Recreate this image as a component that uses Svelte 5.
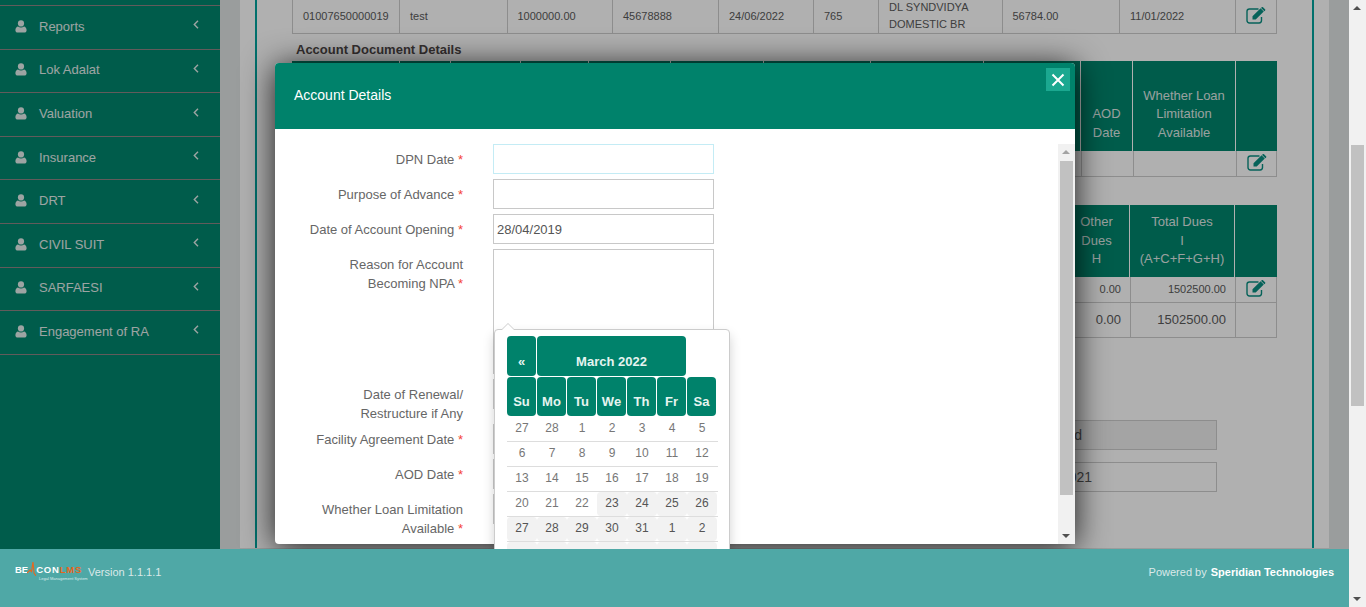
<script lang="ts">
  const menu = ["Reports", "Lok Adalat", "Valuation", "Insurance", "DRT", "CIVIL SUIT", "SARFAESI", "Engagement of RA"];

  const loanRow = ["01007650000019", "test", "1000000.00", "45678888", "24/06/2022", "765", "DL SYNDVIDYA DOMESTIC BR", "56784.00", "11/01/2022"];

  const weekdays = ["Su", "Mo", "Tu", "We", "Th", "Fr", "Sa"];

  // muted = cell with the grey background
  const weeks = [
    [27, 28, 1, 2, 3, 4, 5],
    [6, 7, 8, 9, 10, 11, 12],
    [13, 14, 15, 16, 17, 18, 19],
    [20, 21, 22, 23, 24, 25, 26],
    [27, 28, 29, 30, 31, 1, 2],
    [3, 4, 5, 6, 7, 8, 9]
  ];

  function isMuted(w: number, d: number) {
    return w > 3 || (w === 3 && d >= 3);
  }
</script>

{#snippet editIcon()}
  <svg class="edit" viewBox="0 0 20 17" aria-hidden="true">
    <path d="M15.5 10v3.6a2.4 2.4 0 0 1-2.4 2.4H3.4A2.4 2.4 0 0 1 1 13.6V4.4A2.4 2.4 0 0 1 3.4 2h9.1" fill="none" stroke="currentColor" stroke-width="1.4" />
    <path d="M6.5 9.2 14.6 1.2l3.2 3.2-8.1 8H6.5zM15.6.3a1 1 0 0 1 1.4 0l2 2a1 1 0 0 1 0 1.4l-.6.6-3.3-3.3z" fill="currentColor" />
  </svg>
{/snippet}

<div class="app">
  <div class="viewport">
    <div class="page">
      <aside class="sidebar">
        {#each menu as item}
          <div class="menu-item">
            <svg class="user" viewBox="0 0 12 13" aria-hidden="true">
              <circle cx="6" cy="3.4" r="3.1" fill="currentColor" />
              <path d="M.4 10.3C.4 8 1.6 6.6 3 6.4c.8.7 1.8 1 3 1s2.200-.3 3-1c1.400.2 2.600 1.600 2.600 3.900 0 1.500-1 2.300-2.300 2.300H2.700C1.400 12.600.4 11.800.4 10.300z" fill="currentColor" />
            </svg>
            <span class="menu-label">{item}</span>
            <svg class="chevron" viewBox="0 0 6 9" aria-hidden="true">
              <path d="M5 .8 1.300 4.500 5 8.200" fill="none" stroke="currentColor" stroke-width="1.400" />
            </svg>
          </div>
        {/each}
      </aside>

      <main class="content">
        <div class="panel">
          <div class="frame">
            <div class="row loan-grid">
              {#each loanRow as cell}
                <div class="cell">{cell}</div>
              {/each}
              <div class="cell icon-cell">{@render editIcon()}</div>
            </div>

            <h4 class="section-title">Account Document Details</h4>

            <div class="row doc-grid head">
              {#each Array(9) as _}
                <div class="th"></div>
              {/each}
              <div class="th">AOD Date</div>
              <div class="th">Whether Loan Limitation Available</div>
              <div class="th"></div>
            </div>
            <div class="row doc-grid data">
              {#each Array(11) as _}
                <div class="cell"></div>
              {/each}
              <div class="cell icon-cell">{@render editIcon()}</div>
            </div>

            <div class="row dues-grid head dues">
              <div class="th"></div>
              <div class="th">Other Dues<br />H</div>
              <div class="th">Total Dues<br />I<br />(A+C+F+G+H)</div>
              <div class="th"></div>
            </div>
            <div class="row dues-grid data">
              <div class="cell"></div>
              <div class="cell num">0.00</div>
              <div class="cell num">1502500.00</div>
              <div class="cell icon-cell">{@render editIcon()}</div>
            </div>
            <div class="row dues-grid total">
              <div class="cell"></div>
              <div class="cell num">0.00</div>
              <div class="cell num">1502500.00</div>
              <div class="cell"></div>
            </div>

            <div class="page-fields">
              <div class="page-input disabled">Approved</div>
              <div class="page-input">31/12/2021</div>
            </div>
          </div>
        </div>
      </main>
    </div>

    <div class="overlay"></div>

    <div class="modal" role="dialog" aria-label="Account Details">
      <header class="modal-head">
        <span>Account Details</span>
        <button class="close" type="button" aria-label="Close">
          <svg viewBox="0 0 14 14" aria-hidden="true">
            <path d="M1.500 1.500l11 11M12.500 1.500l-11 11" stroke="#fff" stroke-width="2" fill="none" />
          </svg>
        </button>
      </header>

      <div class="modal-body">
        <form class="form">
          <div class="label">DPN Date <b>*</b></div>
          <div class="input focused"></div>

          <div class="label">Purpose of Advance <b>*</b></div>
          <div class="input"></div>

          <div class="label">Date of Account Opening <b>*</b></div>
          <div class="input">28/04/2019</div>

          <div class="label">Reason for Account<br />Becoming NPA <b>*</b></div>
          <div class="input area"></div>

          <div class="label tall">Date of Renewal/<br />Restructure if Any</div>
          <div class="input"></div>

          <div class="label">Facility Agreement Date <b>*</b></div>
          <div class="input"></div>

          <div class="label">AOD Date <b>*</b></div>
          <div class="input"></div>

          <div class="label">Whether Loan Limitation<br />Available <b>*</b></div>
          <div class="input"></div>
        </form>

        <div class="modal-scroll">
          <span class="arrow up faint"></span>
          <div class="modal-thumb"></div>
          <span class="arrow down"></span>
        </div>
      </div>

      <div class="datepicker">
        <div class="dp-grid dp-head">
          <div class="dp-btn">«</div>
          <div class="dp-btn month">March 2022</div>
        </div>
        <div class="dp-grid dp-days">
          {#each weekdays as day}
            <div class="dp-btn dow">{day}</div>
          {/each}
        </div>
        {#each weeks as week, w}
          <div class="dp-grid dp-week">
            {#each week as date, d}
              <div class="date" class:muted={isMuted(w, d)}>{date}</div>
            {/each}
          </div>
        {/each}
      </div>
    </div>

    <footer class="footer">
      <div class="brand">
        <div class="logo">
          <div class="logo-word">
            <span class="be">BE</span><svg class="peak" viewBox="0 0 9 14" aria-hidden="true"><path d="M0 11 3 8 4.500 9.500 6 0 7 11 9 14" fill="none" stroke="#e8661c" stroke-width="1.100" /></svg><span>CON</span><span class="lms">LMS</span>
          </div>
          <div class="logo-sub">Legal Management System</div>
        </div>
        <span class="version">Version 1.1.1.1</span>
      </div>
      <div class="powered">Powered by <strong>Speridian Technologies</strong></div>
    </footer>
  </div>

  <div class="window-scroll">
    <span class="arrow up"></span>
    <div class="window-thumb"></div>
    <span class="arrow down"></span>
  </div>
</div>

<style>
  :global(body) {
    margin: 0;
    overflow: hidden;
  }

  .app {
    display: flex;
    width: 1366px;
    height: 607px;
    font-family: "Liberation Sans", Arial, sans-serif;
    font-size: 13px;
    overflow: hidden;
  }

  .viewport {
    position: relative;
    flex: 0 0 1349px;
    display: flex;
    flex-direction: column;
    overflow: hidden;
  }

  .page {
    flex: 1;
    min-height: 0;
    display: flex;
    overflow: hidden;
  }

  /* sidebar */
  .sidebar {
    flex: 0 0 220px;
    padding-top: 5px;
    background: #00866d;
    box-sizing: border-box;
  }

  .menu-item {
    display: flex;
    align-items: center;
    height: 43.62px;
    box-sizing: border-box;
    padding: 0 21px 2px 15px;
    border-top: 1px solid #8f8585;
    color: #e4eeec;
    font-size: 13px;
  }

  .menu-item:last-child {
    height: 44.62px;
    padding-bottom: 3px;
    border-bottom: 1px solid #8f8585;
  }

  .user {
    width: 12px;
    height: 13px;
    margin-right: 12px;
  }

  .menu-label {
    flex: 1;
  }

  .chevron {
    width: 6px;
    height: 9px;
    margin-top: -3px;
  }

  /* page behind the dialog */
  .content {
    flex: 1;
    min-width: 0;
    padding: 0 20px;
    background: #dfe4e4;
  }

  .panel {
    height: 100%;
    padding: 0 15px;
    background: #fff;
  }

  .frame {
    height: 100%;
    box-sizing: border-box;
    padding: 0 35px;
    border-left: 2px solid #00a39d;
    border-right: 2px solid #00a39d;
    color: #5a5a5a;
  }

  .row {
    display: grid;
    width: 985px;
    box-sizing: border-box;
    border-left: 1px solid #ccc;
    font-size: 11px;
  }

  .loan-grid {
    grid-template-columns: 107px 107.500px 105.500px 106px 95px 65px 123.500px 117.500px 116px 1fr;
    height: 35px;
    margin-top: -1px;
    border-bottom: 1px solid #ccc;
  }

  .doc-grid {
    grid-template-columns: 108px 51px 70px 68px 82px 93px 107px 113px 97px 52px 103px 1fr;
  }

  .dues-grid {
    grid-template-columns: 772px 66px 105px 1fr;
  }

  .cell {
    display: flex;
    align-items: center;
    padding: 0 10px;
    line-height: 17px;
    border-right: 1px solid #ccc;
    min-width: 0;
  }

  .icon-cell {
    padding: 0 0 2px 10px;
    color: #0a8f82;
  }

  .edit {
    width: 20px;
    height: 17px;
  }

  .section-title {
    margin: 0;
    height: 27px;
    padding: 9px 0 0 4px;
    box-sizing: border-box;
    font-size: 13px;
    line-height: 14px;
    color: #4d4646;
  }

  .head {
    height: 90px;
    background: #00866d;
    border-left: 0;
    color: #dfe8e6;
    font-size: 13px;
  }

  .head.dues {
    height: 72px;
    margin-top: 28px;
  }

  .th {
    display: flex;
    align-items: flex-end;
    justify-content: center;
    padding: 0 4px 9px;
    text-align: center;
    line-height: 18.500px;
    border-right: 1px solid #fff;
  }

  .th:last-child {
    border-right: 0;
  }

  .head.dues .th {
    align-items: center;
    padding-bottom: 0;
  }

  .data {
    height: 26px;
    border-bottom: 1px solid #ccc;
  }

  .total {
    height: 35px;
    border-bottom: 1px solid #ccc;
    font-size: 13px;
  }

  .total .num {
    padding-bottom: 1px;
  }

  .num {
    justify-content: flex-end;
    padding-right: 9px;
  }

  .page-fields {
    display: flex;
    flex-direction: column;
    gap: 12px;
    width: 208px;
    margin: 82px 0 0 717px;
  }

  .page-input {
    height: 30px;
    box-sizing: border-box;
    padding: 0 12px;
    border: 1px solid #ccc;
    font-size: 14px;
    line-height: 28px;
  }

  .page-input.disabled {
    background: #eee;
  }

  .overlay {
    position: absolute;
    inset: 0;
    z-index: 1;
    background: rgba(0, 0, 0, 0.31);
  }

  /* dialog */
  .modal {
    position: absolute;
    z-index: 2;
    left: 275px;
    top: 63px;
    width: 800px;
    height: 481px;
    display: flex;
    flex-direction: column;
    background: #fff;
    border-radius: 4px 4px 0 4px;
    box-shadow: 0 3px 32px rgba(0, 0, 0, 0.85);
  }

  .modal-head {
    flex: 0 0 66px;
    box-sizing: border-box;
    position: relative;
    display: flex;
    align-items: center;
    padding: 0 19px 2px;
    background: #00826b;
    border-radius: 4px 4px 0 0;
    color: #fff;
    font-size: 14px;
  }

  .close {
    position: absolute;
    top: 5px;
    right: 5px;
    width: 24px;
    height: 23px;
    padding: 5px;
    display: flex;
    border: 0;
    background: #1ba890;
  }

  .close svg {
    width: 14px;
    height: 14px;
  }

  .modal-body {
    flex: 1;
    min-height: 0;
    display: flex;
    overflow: hidden;
  }

  .form {
    flex: 1;
    display: grid;
    grid-template-columns: 188px 221px;
    column-gap: 30px;
    row-gap: 5px;
    align-content: start;
    padding-top: 15px;
    color: #666;
  }

  .label {
    padding-top: 6px;
    text-align: right;
    line-height: 19px;
  }

  .label.tall {
    margin-bottom: -4px;
  }

  .label b {
    font-weight: 400;
    color: #f44336;
  }

  .input {
    height: 30px;
    box-sizing: border-box;
    padding: 0 3px;
    border: 1px solid #c8c8c8;
    line-height: 29px;
    color: #555;
  }

  .input.focused {
    border-color: #c4ecf5;
  }

  .input.area {
    height: 125px;
  }

  .modal-scroll {
    flex: 0 0 17px;
    margin-top: 15px;
    display: flex;
    flex-direction: column;
    align-items: center;
    background: #f1f1f1;
  }

  .modal-thumb {
    flex: 0 0 334px;
    width: 13px;
    background: #c1c1c1;
  }

  .arrow {
    flex: 0 0 17px;
    width: 17px;
    height: 17px;
    position: relative;
  }

  .arrow::after {
    content: "";
    position: absolute;
    left: 4px;
    border-left: 4px solid transparent;
    border-right: 4px solid transparent;
  }

  .arrow.up::after {
    top: 6px;
    border-bottom: 4px solid #505050;
  }

  .arrow.up.faint::after {
    border-bottom-color: #a3a3a3;
  }

  .arrow.down::after {
    top: 7px;
    border-top: 4px solid #505050;
  }

  .modal-scroll .arrow.down {
    margin-top: auto;
  }

  .window-scroll {
    flex: 0 0 17px;
    display: flex;
    flex-direction: column;
    align-items: center;
    background: #f1f1f1;
  }

  .window-scroll .arrow.down {
    margin-top: auto;
  }

  .window-thumb {
    flex: 0 0 261px;
    width: 13px;
    margin-top: 128px;
    background: #c1c1c1;
  }

  /* date picker popup */
  .datepicker {
    position: absolute;
    left: 219px;
    top: 266px;
    width: 236px;
    box-sizing: border-box;
    padding: 6px 12px 4px;
    background: #fff;
    border: 1px solid #ccc;
    border-radius: 4px;
    box-shadow: 0 6px 12px rgba(0, 0, 0, 0.18);
  }

  .datepicker::before,
  .datepicker::after {
    content: "";
    position: absolute;
    left: 6px;
    border-left: 7px solid transparent;
    border-right: 7px solid transparent;
    border-bottom: 7px solid #ccc;
    top: -7px;
  }

  .datepicker::after {
    border-bottom-color: #fff;
    top: -6px;
  }

  .dp-grid {
    display: grid;
    grid-template-columns: repeat(7, 30px);
  }

  .dp-btn {
    margin: 0 1px 1px 0;
    padding-top: 18px;
    box-sizing: border-box;
    height: 40px;
    background: #00826b;
    border-radius: 4px;
    color: #e6f4f0;
    font-weight: 700;
    line-height: 16px;
    text-align: center;
  }

  .dp-btn.month {
    grid-column: span 5;
  }

  .dp-btn.dow {
    height: 39px;
    padding-top: 17px;
  }

  .dp-week {
    height: 25px;
    box-sizing: border-box;
    width: 211px;
    border-bottom: 1px solid #ddd;
  }

  .date {
    height: 24px;
    line-height: 23px;
    font-size: 12px;
    text-align: center;
    color: #777;
  }

  .dp-week:last-child .date {
    line-height: 32px;
  }

  .date.muted {
    background: #f2f2f2;
    border-radius: 4px;
    color: #555;
  }

  /* footer */
  .footer {
    position: relative;
    z-index: 3;
    flex: 0 0 58px;
    box-sizing: border-box;
    display: flex;
    align-items: center;
    justify-content: space-between;
    padding: 0 15px 12px;
    background: #4fa8a6;
    color: #dbe9e9;
    font-size: 11px;
  }

  .brand {
    display: flex;
    align-items: center;
    gap: 4px;
  }

  .logo {
    width: 69px;
  }

  .logo-word {
    display: flex;
    align-items: center;
    height: 12px;
    color: #fff;
    font-size: 9.500px;
    font-weight: 700;
    letter-spacing: 0.800px;
  }

  .be {
    margin-right: -1px;
    letter-spacing: 0;
  }

  .peak {
    flex: none;
    width: 9px;
    height: 14px;
    margin: -2px 0 0;
  }

  .lms {
    color: #e8661c;
  }

  .logo-sub {
    padding-left: 24px;
    font-size: 4px;
    line-height: 5px;
    white-space: nowrap;
    color: #dcecec;
  }

  .version {
    line-height: 12px;
    color: #dbe9e9;
  }

  .powered strong {
    margin-left: 1px;
    color: #fff;
  }
</style>
